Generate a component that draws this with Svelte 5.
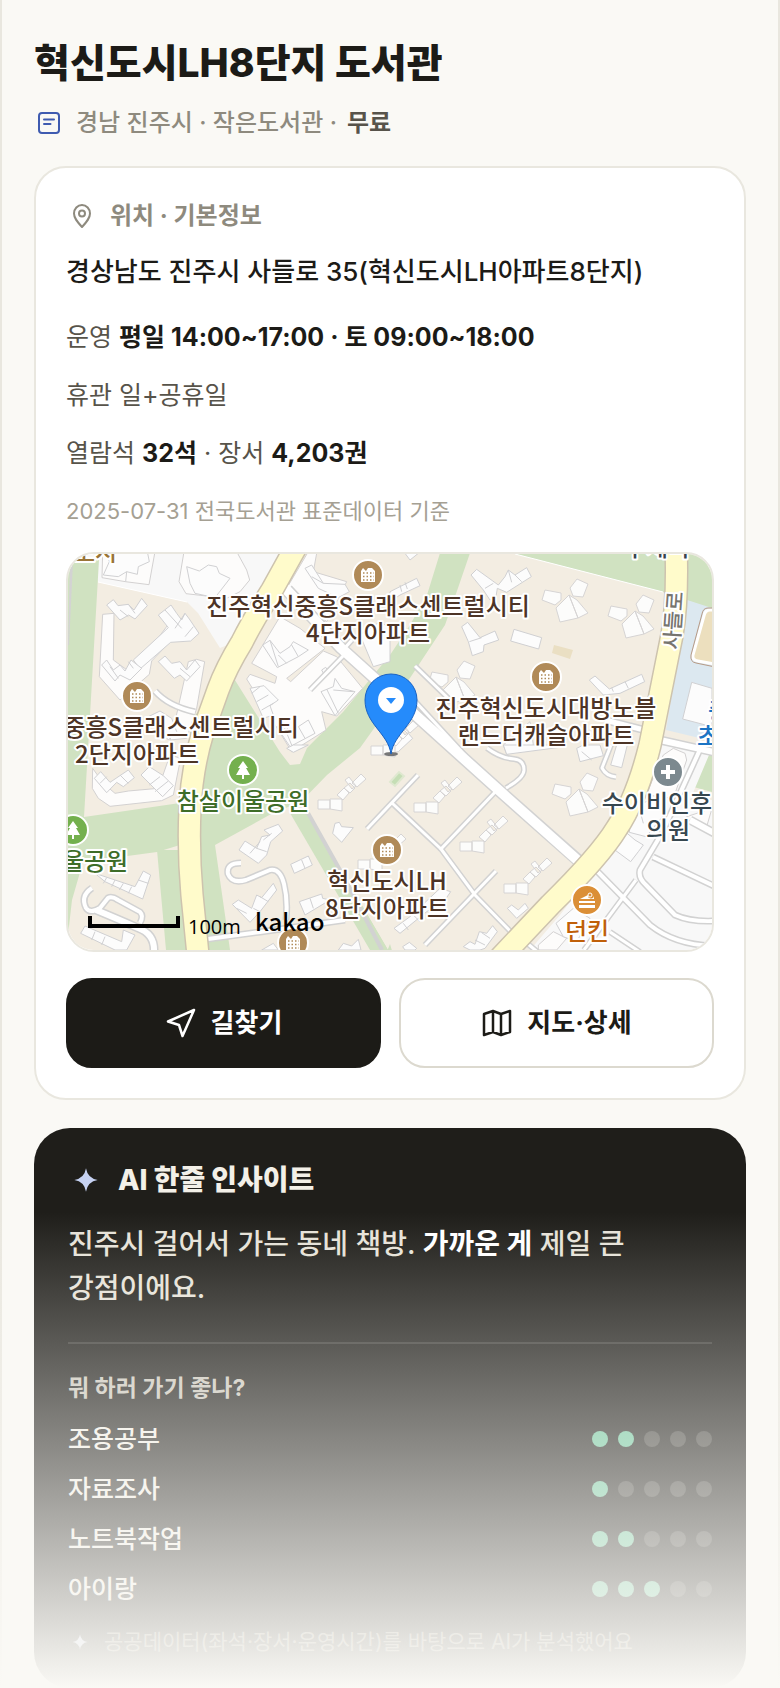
<script lang="ts">
    const activities = [
        { name: '조용공부', score: 2 },
        { name: '자료조사', score: 1 },
        { name: '노트북작업', score: 2 },
        { name: '아이랑', score: 3 }
    ];

    const spark = 'M12 2 Q13.4 10.6 22 12 Q13.4 13.4 12 22 Q10.6 13.4 2 12 Q10.6 10.6 12 2Z';

    // building outlines, grouped by map tile (3 units = 1 map pixel)
    const tiles = [
        {
            x: 60, y: 545,
            lots: [
                'M128 20 L126 98 L196 110 L267 119 L285 20Z',
                'M372 20 L357 110 L378 146 L500 160 L540 140 L569 105 L560 75 L530 20Z',
                'M128 208 L162 205 L160 345 L215 385 L325 238 L340 245 L335 285 L275 348 L268 388 L180 465 L118 395Z',
                'M385 350 L410 343 L434 350 L410 490 L380 580 L330 585 L345 530Z',
                'M660 215 L720 250 L795 310 L680 400 L692 410 L790 318 L830 335 L908 430 L830 513 L785 500 L798 555 L695 620 L560 402 L570 388 L645 415 L650 395 L575 355Z',
                'M680 130 L745 20 L770 25 L760 80 L860 110 L800 230Z'
            ],
            buildings: [
                'M130 90 L148 50 L140 20 L262 20 L268 50 L235 65 L232 88 L200 80 L175 95Z',
                'M380 65 L418 78 L445 60 L470 65 L478 85 L510 100 L465 158 L405 145 L390 115Z',
                'M140 180 L160 164 L174 182 L205 178 L222 195 L245 160 L262 182 L225 222 L206 210 L180 225Z',
                'M295 210 L333 180 L350 205 L365 225 L375 205 L388 222 L417 265 L392 288 L332 292 L240 372 L220 345 L325 248Z',
                'M125 360 L140 345 L160 375 L180 360 L195 378 L213 345 L245 370 L210 405 L180 390 L165 408Z',
                'M295 350 L315 333 L335 355 L360 350 L380 375 L405 345 L420 365 L380 408 L360 390 L343 400Z',
                'M608 300 L630 286 L660 325 L690 305 L700 290 L745 315 L715 335 L652 368Z',
                'M570 430 L612 422 L655 465 L630 482 L640 510 L610 520Z',
                'M650 545 L672 535 L685 555 L715 545 L745 525 L765 565 L690 605Z',
                'M783 440 L820 425 L825 400 L845 430 L885 440 L850 480 L825 512Z',
                'M735 70 L755 60 L790 115 L855 118 L868 140 L835 158 L775 130Z',
                'M785 375 L797 367 L806 380 L793 390Z',
                'M265 515 L300 498 L335 520 L350 560 L325 585Z',
                'M900 270 L960 230 L990 250 L990 350 L940 365Z'
            ],
            lines: ['M197 110 L200 80', 'M315 195 L365 250', 'M345 250 L375 205', 'M375 275 L400 245', 'M150 365 L175 400', 'M205 350 L220 370', 'M630 286 L655 365', 'M655 330 L680 355', 'M695 300 L715 335', 'M575 445 L600 425', 'M590 470 L625 450', 'M605 495 L640 475', 'M670 540 L695 600', 'M715 545 L735 580', 'M800 432 L835 505', 'M820 435 L880 440', 'M755 95 L790 115', 'M180 195 L205 215', 'M205 178 L225 205', 'M360 370 L390 395']
        },
        {
            x: 390, y: 545,
            lots: [],
            buildings: [
                'M243 90 L260 73 L325 120 L345 95 L355 75 L375 90 L410 68 L424 95 L350 142 L322 130 L318 155 L300 165 L280 135Z',
                'M215 245 L233 232 L270 278 L315 258 L326 285 L282 300 L280 320 L247 332 L235 290Z',
                'M372 253 L455 278 L446 312 L362 288Z',
                'M598 405 L615 393 L658 432 L755 388 L764 410 L690 445 L640 450Z',
                'M45 25 L85 25 L60 45Z',
                'M0 140 L80 100 L90 122 L30 150 L0 170Z',
                'M5 600 L55 565 L68 580 L25 620 L5 625Z',
                'M340 600 L420 530 L430 600 L350 628Z',
                'M905 412 L966 430 L966 545 L878 522Z'
            ],
            lines: ['M285 130 L310 115', 'M355 75 L365 112', 'M375 90 L395 110', 'M238 290 L275 278', 'M670 440 L665 428', 'M715 430 L705 410', 'M35 140 L30 120', 'M52 132 L45 112']
        },
        {
            x: 60, y: 745,
            lots: [
                'M98 70 L97 130 L115 160 L150 184 L305 167 L340 150 L362 40 L330 30 L295 130 L205 138 L165 145 L130 115Z'
            ],
            buildings: [
                'M103 100 L122 80 L150 112 L205 75 L223 98 L190 125 L170 112 L140 143Z',
                'M243 90 L268 65 L310 92 L340 122 L308 155Z',
                'M537 315 L555 288 L590 310 L605 275 L630 270 L612 255 L655 238 L668 258 L632 290 L620 330 L595 355Z',
                'M692 358 L745 333 L757 360 L703 385Z',
                'M718 470 L785 447 L788 460 L810 465 L735 510Z',
                'M517 478 L535 465 L575 490 L590 450 L605 458 L640 415 L650 435 L600 500 L570 532Z',
                'M825 235 L838 232 L845 245 L880 248 L845 292 L818 265Z',
                'M105 385 L225 425 L250 378 L272 390 L248 462 L135 410Z',
                'M62 565 L75 543 L185 590 L190 555 L225 570 L200 615 L165 615Z',
                'M680 10 L700 0 L745 0 L700 22Z',
                'M605 615 L640 595 L655 615Z',
                'M835 615 L850 595 L875 603 L895 583 L903 615Z'
            ],
            lines: ['M120 115 L140 95', 'M180 90 L205 115', 'M268 120 L300 95', 'M285 140 L325 108', 'M570 325 L600 290', 'M590 310 L620 320', 'M610 285 L635 265', 'M530 490 L560 505', 'M580 490 L600 500', 'M600 455 L625 470', 'M140 398 L130 415', 'M165 405 L155 425', 'M190 415 L178 435', 'M215 425 L205 445', 'M235 405 L265 415', 'M105 560 L95 585', 'M135 575 L125 600', 'M750 460 L760 490', 'M725 345 L735 370']
        },
        {
            x: 390, y: 745,
            lots: [
                'M785 110 L820 30 L850 10 L885 25 L890 45 L850 160 L770 150Z',
                'M890 215 L966 190 L950 245 L905 235Z',
                'M445 600 L490 560 L530 580 L500 615 L445 615Z'
            ],
            buildings: [
                'M340 0 L530 0 L525 5 L350 28Z',
                'M560 10 L580 0 L630 0 L640 32 L570 50Z',
                'M680 0 L712 0 L695 68 L662 60Z',
                'M725 190 L790 160 L830 200 L768 275 L718 262Z',
                'M668 310 L708 262 L735 285 L760 300 L745 320 L722 350Z',
                'M352 490 L365 480 L385 495 L405 475 L415 490 L380 520Z',
                'M12 550 L60 515 L150 430 L182 440 L165 465 L110 500 L30 565Z',
                'M220 605 L240 590 L255 598 L268 560 L290 565 L308 542 L322 560 L285 610 L270 615 L240 615Z',
                'M38 605 L58 592 L80 610 L75 615 L45 615Z',
                'M498 535 L550 490 L600 520 L560 590 L520 575Z'
            ],
            lines: ['M40 535 L55 555', 'M70 510 L90 530', 'M255 585 L285 600', 'M275 563 L300 580', 'M575 20 L605 45', 'M745 180 L760 235']
        }
    ];

    const stairBlocks = [[414, 803], [460, 842], [504, 884], [318, 800], [371, 746], [358, 860]];
    const towers = [[567, 598], [633, 614], [454, 680], [577, 792]];

    const lanes = [
        { d: 'M415 666 L450 700 M414 700 L497 790 L441 849 L475 895 L512 933', w: 3 },
        { d: 'M367 829 L418 775 M392 803 L441 849 M496 871 L425 945', w: 3 },
        { d: 'M487 748 Q500 758 514 759 Q524 760 524 770 Q524 778 506 788', w: 3 },
        { d: 'M241 863 Q226 863 228 874 Q232 884 246 880 L270 870 Q280 868 284 884 Q288 900 286 920', w: 4 },
        { d: 'M92 888 Q80 896 86 908 Q90 914 100 908 L108 898 Q112 896 118 900 L140 912 Q144 916 140 923', w: 4 },
        { d: 'M96 910 Q120 920 138 928 Q155 934 154 952', w: 6 },
        { d: 'M208 939 L260 932 L345 920', w: 4 },
        { d: 'M155 691 Q168 706 195 712', w: 4 },
        { d: 'M343 650 L352 640 M344 655 L310 690', w: 3 },
        { d: 'M611 745 L602 768 Q606 776 616 777', w: 3 },
        { d: 'M702 745 L662 833 L640 870 Q638 878 646 885 L675 915 Q690 922 714 921', w: 4 },
        { d: 'M598 872 L650 925 Q675 945 714 946 M653 857 L714 886', w: 4 },
        { d: 'M690 820 L714 833 M660 740 L714 752', w: 6 },
        { d: 'M636 880 L584 950 M610 932 L640 952 M528 944 L540 954', w: 3 },
        { d: 'M605 720 L648 731', w: 5 }
    ];

    const pois = [
        { x: 368, y: 575, kind: 'apt', lines: ['진주혁신중흥S클래스센트럴시티', '4단지아파트'] },
        { x: 137, y: 696, kind: 'apt', lines: ['진주혁신중흥S클래스센트럴시티', '2단지아파트'] },
        { x: 546, y: 677, kind: 'apt', lines: ['진주혁신도시대방노블', '랜드더캐슬아파트'] },
        { x: 387, y: 850, kind: 'apt', lines: ['혁신도시LH', '8단지아파트'] },
        { x: 293, y: 943, kind: 'apt', lines: [] },
        { x: 243, y: 770, kind: 'park', lines: ['참살이울공원'] },
        { x: 73, y: 830, kind: 'park', lines: ['한여울공원'] },
        { x: 668, y: 772, kind: 'clinic', lines: ['수이비인후과', '의원'] },
        { x: 587, y: 900, kind: 'cafe', lines: ['던킨'] }
    ];
</script>

<main class="page">
    <h1>혁신도시LH8단지 도서관</h1>
    <p class="summary">
        <svg class="icon" viewBox="0 0 32 32" aria-hidden="true">
            <rect x="5" y="6" width="20" height="20" rx="3" />
            <path d="M10 12.500 H20 M10 17 H16.500" />
        </svg>
        <span>경남 진주시 · 작은도서관 ·</span>
        <strong>무료</strong>
    </p>

    <section class="card">
        <h2 class="card-title">
            <svg class="icon" viewBox="0 0 32 32" aria-hidden="true">
                <path d="M16 27 C11 21.500 8 18 8 13.500 A8 8.500 0 0 1 24 13.500 C24 18 21 21.500 16 27Z" />
                <circle cx="16" cy="13.500" r="3" />
            </svg>
            위치 · 기본정보
        </h2>
        <p class="address">경상남도 진주시 사들로 35(혁신도시LH아파트8단지)</p>
        <p class="row">운영 <b>평일 14:00~17:00 · 토 09:00~18:00</b></p>
        <p class="row">휴관 일+공휴일</p>
        <p class="row">열람석 <b>32석</b> · 장서 <b>4,203권</b></p>
        <p class="source">2025-07-31 전국도서관 표준데이터 기준</p>

        <div class="map">
            <svg viewBox="68 554 644 396" preserveAspectRatio="xMidYMid slice" role="img" aria-label="도서관 위치 지도">
                <defs>
                    <g id="stair" class="building">
                        <path d="M0 0H12V9H0Z M12 -1 L24 -1 V11 L12 9Z M19 -5 L25 0 L31 -7 L26 -12Z M26 -12 L32 -7 L37 -12 L32 -17Z M27 -20 L31 -23 L38 -14 L34 -11Z M34 -17 L43 -26 L48 -21 L39 -13Z" />
                    </g>
                    <g id="tower" class="building">
                        <path d="M-25 2 L-22 -8 L-6 -5 L-6 2 L-12 7Z M3 -10 L10 -19 L21 -14 L16 -1 L6 -2Z M-11 10 L2 -3 L11 20 L-7 24Z M2 -3 L10 2 L21 15 L11 20Z" />
                    </g>
                    <g id="apt">
                        <path fill="#fff" d="M-7 -4 L-5 -7 L-2 -4 L0 -7 H2 L4 -7 L7 -4 V7 H-7Z" />
                        <path stroke="#b08a58" stroke-width="1.500" stroke-dasharray="1.500 2" d="M-5 -2H6 M-5 1.500H6 M-5 5H6" />
                    </g>
                    <path id="park" fill="#fff" d="M0 -9 L5 -2 H3 L7 5 H1 V9 H-1 V5 H-7 L-3 -2 H-5Z" />
                    <path id="clinic" fill="#fff" d="M-2 -7H2V-2H7V2H2V7H-2V2H-7V-2H-2Z" />
                    <g id="cafe" fill="#fff">
                        <path d="M-7 -1 L1 -5 A3 3 0 0 0 7 -4 V-1Z M-8 1H8V3H-8Z M-8 5H8V8H-8Z" />
                        <circle cx="3" cy="-5" r="2" fill="none" stroke="#fff" />
                    </g>
                </defs>

                <rect x="68" y="554" width="644" height="396" fill="#f3ede2" />
                <path fill="#f8f8f8" d="M68 554 H292 L270 590 L240 640 L220 648 L198 613 L187 602 L98 582 L92 560Z" />
                <g class="green">
                    <path d="M75 560 H99 L90 715 L84 817 L180 803 V845 L157 852 L83 862 L72 900 L68 935 V560Z" />
                    <path d="M157 850 H200 V950 H166Z" />
                    <path d="M440 553 H470 L458 588 L445 625 L410 678 L360 748 L327 775 L293 810 L372 950 H388 L308 813 L293 805 L273 813 L215 845 L230 950 H190 V720 L233 677 L280 752 L290 765 L300 764 L307 748 L343 712 L390 655 L410 625 L427 595Z" />
                    <path d="M290 813 L308 813 L388 950 H370Z" />
                    <path d="M515 554 H712 V609 L663 592Z" />
                    <path d="M702 750 H712 V792 L690 786Z M390 944 L393 954 H386Z" />
                </g>
                <path fill="none" stroke="#fff" d="M515 554 L663 592 M98 582 L187 602" />
                <path fill="#dce8f0" d="M687 600 L712 608 V741 L666 730Z" />
                <path fill="#f8f8f8" d="M665 738 L712 748 L690 800 H712 V950 H530 L560 915 L625 830 L650 770Z" />
                <path fill="#d3d3d3" d="M70 562 L73 562 L69 645 H68Z" />
                <path fill="#ecdfbe" stroke="#fff" stroke-width="3" d="M720 610 H710 Q705 610 704 616 L693 655 Q692 660 698 661 L720 665Z" />
                <path fill="none" stroke="#b79a86" d="M720 608 H708 Q703 608 702 614 L691 655 Q690 662 696 663 L720 668" />
                <path fill="#eadfc3" d="M554 645 L573 650 L570 659 L552 653Z" />
                <path fill="#c5deb5" stroke="#dfe8d0" stroke-width="2" d="M390 782 L399 772 L404 776 L395 786Z" />

                {#each tiles as tile}
                    <g transform="translate({tile.x} {tile.y}) scale({1 / 3})">
                        {#each tile.lots as d}<path class="lot" {d} />{/each}
                        {#each tile.buildings as d}<path class="block" {d} />{/each}
                        {#each tile.lines as d}<path class="block" {d} />{/each}
                    </g>
                {/each}
                {#each stairBlocks as [x, y]}<use href="#stair" {x} {y} />{/each}
                {#each towers as [x, y]}<use href="#tower" {x} {y} />{/each}

                <path class="lane" stroke="#d2d2d2" stroke-width="4" d="M308 813 L340 870 L382 950" />
                {#each lanes as lane}<path class="lane" stroke="#d2d2d2" stroke-width={lane.w + 3} d={lane.d} />{/each}
                <path class="lane" stroke="#d2d2d2" stroke-width="13" d="M287 590 L341 648 L502 793 L580 862" />
                {#each lanes as lane}<path class="lane" stroke="#fff" stroke-width={lane.w} d={lane.d} />{/each}
                <path class="lane" stroke="#fff" stroke-width="10" d="M285 588 L341 648 L502 793 L584 866" />

                <g class="road">
                    <path d="M300 540 L292 554 L272 590 Q252 622 242 642 Q226 668 218 690 L203 732 Q192 768 190 808 Q188 850 192 895 L198 955" />
                    <path d="M676 545 Q678 600 672 635 L660 695 L650 745 Q637 798 617 828 Q600 856 550 905 L500 958" />
                </g>
                <g class="road fill">
                    <path d="M300 540 L292 554 L272 590 Q252 622 242 642 Q226 668 218 690 L203 732 Q192 768 190 808 Q188 850 192 895 L198 955" />
                    <path d="M676 545 Q678 600 672 635 L660 695 L650 745 Q637 798 617 828 Q600 856 550 905 L500 958" />
                </g>

                <g class="label">
                    <text x="95" y="561" fill="#9a7436">도시</text>
                    <text x="657" y="556" fill="#39434d">우체국</text>
                    <text x="730" y="719" fill="#1b74c4">충무</text>
                    <text x="719" y="745" fill="#1b74c4">초등</text>
                    <text class="street" transform="translate(681 621) rotate(-86)">사들로</text>
                </g>
                {#each pois as poi}
                    <g class="label {poi.kind}" transform="translate({poi.x} {poi.y})">
                        <circle r="15" />
                        <use href="#{poi.kind}" />
                        {#each poi.lines as line, i}<text y={40 + i * 27}>{line}</text>{/each}
                    </g>
                {/each}

                <ellipse cx="391" cy="754" rx="7" ry="2" fill="#777" />
                <path fill="#258bfb" stroke="#1862c4" d="M391 754 C388 733 365 724 365 700 A26 26 0 0 1 417 700 C417 724 394 733 391 754Z" />
                <circle cx="391" cy="700" r="13" fill="#fff" />
                <path fill="#258bfb" d="M386 698 H396 L391 704Z" />

                <path fill="none" stroke="#000" stroke-width="4" d="M90 916 V926 H178 V916" />
                <text class="scale" x="188" y="934">100m</text>
                <text class="brand" x="255" y="931">kakao</text>
            </svg>
        </div>

        <div class="actions">
            <button type="button" class="primary">
                <svg class="icon" viewBox="0 0 32 32" aria-hidden="true">
                    <path d="M29 3 L3 14.500 L14 18 L17.500 29Z" />
                </svg>
                길찾기
            </button>
            <button type="button">
                <svg class="icon" viewBox="0 0 32 32" aria-hidden="true">
                    <path d="M3 7 L12 4 L20 7 L29 4 V25 L20 28 L12 25 L3 28Z M12 4 V25 M20 7 V28" />
                </svg>
                지도·상세
            </button>
        </div>
    </section>

    <section class="insight">
        <h2>
            <svg viewBox="0 0 24 24" aria-hidden="true"><path d={spark} /></svg>
            AI 한줄 인사이트
        </h2>
        <p class="message">진주시 걸어서 가는 동네 책방. <b>가까운 게</b> 제일 큰 강점이에요.</p>
        <h3>뭐 하러 가기 좋나?</h3>
        <ul>
            {#each activities as activity}
                <li>
                    {activity.name}
                    <span class="dots" role="img" aria-label="5점 중 {activity.score}점">
                        {#each Array(5) as _, i}<i class:on={i < activity.score}></i>{/each}
                    </span>
                </li>
            {/each}
        </ul>
        <p class="note">
            <svg viewBox="0 0 24 24" aria-hidden="true"><path d={spark} /></svg>
            공공데이터(좌석·장서·운영시간)를 바탕으로 AI가 분석했어요
        </p>
    </section>
    <div class="fade"></div>
</main>

<style>
    :global(body) {
        margin: 0;
        background: #faf9f5;
    }

    .page {
        position: relative;
        box-sizing: border-box;
        min-height: 100vh;
        padding: 38px 32px 0;
        border: solid #e9e7df;
        border-width: 0 2px;
        background: #faf9f5;
        color: #1c1b17;
        font-family: Inter, "Noto Sans CJK KR", sans-serif;
        word-break: keep-all;
    }

    h1, h2, h3, p, ul {
        margin: 0;
        padding: 0;
    }

    h1 {
        font-size: 39px;
        line-height: 50px;
        font-weight: 800;
    }

    .icon {
        width: 32px;
        height: 32px;
        flex: none;
        fill: none;
        stroke: currentColor;
        stroke-width: 2;
        stroke-linecap: round;
        stroke-linejoin: round;
    }

    .summary {
        display: flex;
        align-items: center;
        gap: 10px;
        margin: 19px 0 27px;
        font-size: 24px;
        line-height: 32px;
        font-weight: 500;
        color: #8e8a7e;
    }

    .summary .icon {
        color: #3f5bb0;
    }

    .summary strong {
        color: #57534a;
    }

    .card {
        display: flex;
        flex-direction: column;
        gap: 24px;
        padding: 32px 30px 30px;
        border: 2px solid #e9e7df;
        border-radius: 32px;
        background: #fff;
    }

    .card-title {
        display: flex;
        align-items: center;
        gap: 12px;
        font-size: 24px;
        line-height: 32px;
        font-weight: 700;
        color: #8e8a7e;
    }

    .address {
        margin-bottom: 8px;
        font-size: 26px;
        line-height: 32px;
        font-weight: 500;
    }

    .row {
        font-size: 25px;
        line-height: 34px;
        color: #57534a;
    }

    .row b {
        color: #1c1b17;
    }

    .source {
        font-size: 22px;
        line-height: 34px;
        color: #a5a093;
    }

    .map {
        overflow: hidden;
        border: 2px solid #e9e7df;
        border-radius: 28px;
    }

    .map svg {
        display: block;
        width: 100%;
        aspect-ratio: 644 / 396;
    }

    .green {
        fill: #d0e2c1;
    }

    .building {
        fill: #fcfcfb;
        stroke: #d6d4d4;
    }

    .lot {
        fill: #fdfcfb;
        stroke: #d3d1d1;
        stroke-width: 3;
    }

    .block {
        fill: #fcfcfc;
        stroke: #d0d0d2;
        stroke-width: 3;
    }

    .lane {
        fill: none;
        stroke-linejoin: round;
    }

    .road {
        fill: none;
        stroke: #cdc3ae;
        stroke-width: 24;
    }

    .road.fill {
        stroke: #fffbcb;
        stroke-width: 21;
    }

    .label text {
        font: 500 24px "Noto Sans CJK KR", sans-serif;
        text-anchor: middle;
        paint-order: stroke;
        stroke: #fff;
        stroke-width: 4;
        stroke-linejoin: round;
    }

    .label .street {
        fill: #77756f;
        font-size: 21px;
    }

    .label circle {
        stroke: #fff;
        stroke-width: 2;
    }

    .apt circle {
        fill: #b08a58;
    }

    .apt text {
        fill: #4d3426;
    }

    .park circle {
        fill: #74b04e;
    }

    .park text {
        fill: #3e6d28;
    }

    .clinic circle {
        fill: #7c898f;
    }

    .clinic text {
        fill: #37474f;
    }

    .cafe circle {
        fill: #db8f37;
    }

    .cafe text {
        fill: #c0600a;
    }

    .scale {
        font: 400 20px "Open Sans", sans-serif;
    }

    .brand {
        font: 500 24px "Noto Sans CJK KR", sans-serif;
    }

    .actions {
        display: grid;
        grid-template-columns: 1fr 1fr;
        gap: 18px;
        margin-top: 2px;
    }

    button {
        display: flex;
        align-items: center;
        justify-content: center;
        gap: 14px;
        height: 90px;
        border: 2px solid #dcd9cf;
        border-radius: 26px;
        background: #fff;
        color: #1c1b17;
        font: 700 26px/32px Inter, "Noto Sans CJK KR", sans-serif;
    }

    button .icon {
        stroke-width: 2.5;
    }

    .primary {
        border-color: #1c1b17;
        background: #1c1b17;
        color: #fff;
    }

    .insight {
        margin-top: 28px;
        padding: 34px 34px 30px;
        border-radius: 36px;
        background: #1f1e1a;
        color: #f3f0e8;
    }

    .insight h2 {
        display: flex;
        align-items: center;
        gap: 14px;
        font-size: 28px;
        line-height: 36px;
        font-weight: 800;
    }

    .insight h2 svg {
        width: 28px;
        height: 28px;
        padding: 0 4px;
        fill: #c6d2f2;
    }

    .message {
        margin: 24px 0 32px;
        font-size: 28px;
        line-height: 44px;
        font-weight: 500;
        color: #e6e2d8;
    }

    .message b {
        color: #fff;
    }

    h3 {
        padding-top: 28px;
        border-top: 2px solid #3a3935;
        font-size: 23px;
        line-height: 32px;
        font-weight: 700;
        color: #c9c5ba;
    }

    ul {
        padding: 10px 0 12px;
        list-style: none;
    }

    li {
        display: flex;
        align-items: center;
        justify-content: space-between;
        font-size: 25px;
        line-height: 50px;
        font-weight: 500;
        color: #f3f0e8;
    }

    .dots {
        display: flex;
        gap: 10px;
    }

    .dots i {
        width: 16px;
        height: 16px;
        border-radius: 50%;
        background: #45443f;
    }

    .dots .on {
        background: #6ec59c;
    }

    .note {
        display: flex;
        align-items: center;
        gap: 12px;
        font-size: 21px;
        line-height: 32px;
        color: #8e8a7e;
    }

    .note svg {
        width: 18px;
        height: 18px;
        padding: 0 3px;
        fill: #c6d2f2;
    }

    .fade {
        position: absolute;
        right: -2px;
        bottom: 0;
        left: -2px;
        height: 476px;
        background: linear-gradient(#faf9f500, #faf9f5);
        pointer-events: none;
    }
</style>
